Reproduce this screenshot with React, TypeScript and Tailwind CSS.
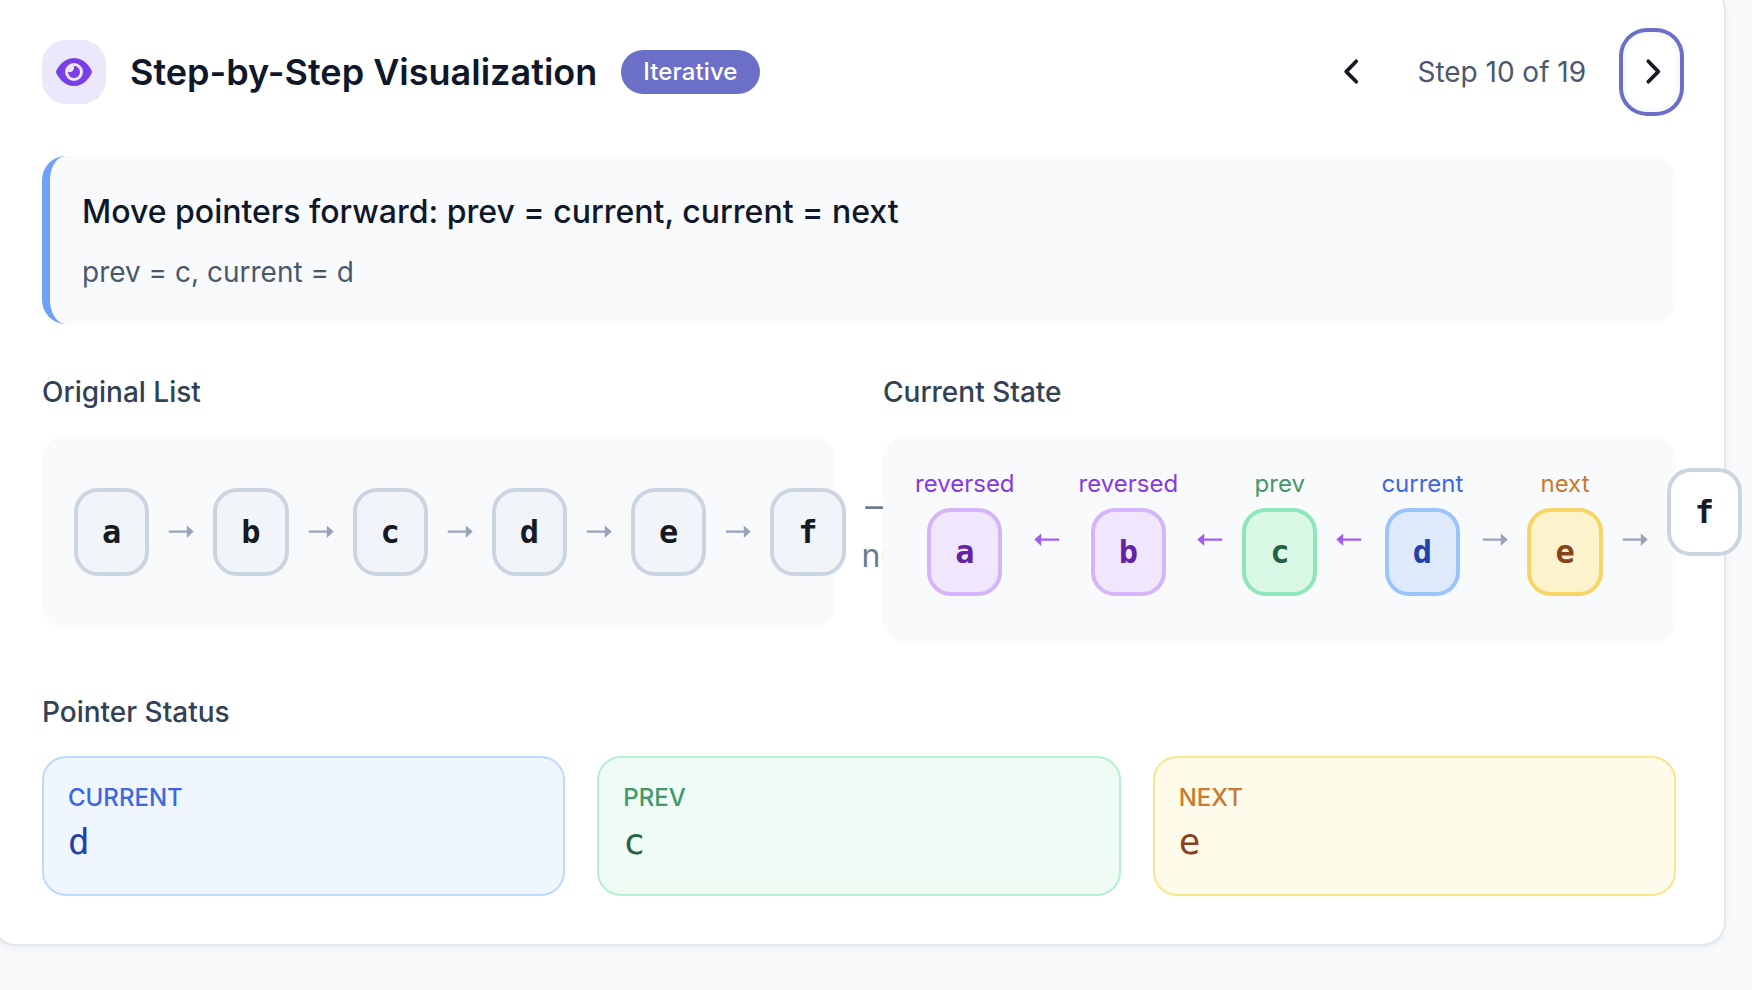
import { Fragment } from "react";
import { FaEye } from "react-icons/fa6";

const tones = {
  plain: { box: "border-[#cbd5e1] bg-[#f1f5f9] text-[#171923]", label: "" },
  open: { box: "border-[#cbd5e1] bg-white text-[#171923]", label: "" },
  purple: { box: "border-[#d4b4fa] bg-[#f1e7fd] text-[#6323a3]", label: "text-[#8838e0]" },
  green: { box: "border-[#8ee6ba] bg-[#daf8e6] text-[#276048]", label: "text-[#43976b]" },
  blue: { box: "border-[#9cc4fb] bg-[#dee9fc] text-[#2440ab]", label: "text-[#3c66e4]" },
  amber: { box: "border-[#f6d566] bg-[#fcf2cb] text-[#87431c]", label: "text-[#c97a30]" },
};

type Tone = keyof typeof tones;

function Node({ value, tone, label }: { value: string; tone: Tone; label?: string }) {
  return (
    <div className="flex shrink-0 flex-col items-center">
      {label && <div className={`mb-2 text-[24px] leading-8 ${tones[tone].label}`}>{label}</div>}
      <div
        className={`rounded-3xl border-4 px-6 py-4 font-['DejaVu_Sans_Mono',monospace] text-[32px] font-bold leading-[48px] ${tones[tone].box}`}
      >
        {value}
      </div>
    </div>
  );
}

function ArrowGlyph({ className }: { className: string }) {
  return (
    <svg viewBox="0 0 32 32" className={className} fill="currentColor">
      <path d="M3.8 14.4h18v-5l6.9 6.2-6.9 6.4v-5.2h-18z" />
    </svg>
  );
}

function Arrow({ back = false }: { back?: boolean }) {
  return (
    <ArrowGlyph
      className={`mx-4 h-8 w-8 shrink-0 self-center ${back ? "-scale-x-100 text-[#a25cf0]" : "text-[#97a4b8]"}`}
    />
  );
}

function Chevron({ d }: { d: string }) {
  return (
    <svg
      viewBox="0 0 48 48"
      className="h-12 w-12 shrink-0"
      fill="none"
      stroke="currentColor"
      strokeWidth="3.7"
      strokeLinecap="round"
      strokeLinejoin="round"
    >
      <path d={d} />
    </svg>
  );
}

const original = ["a", "b", "c", "d", "e", "f"];

const state: { value: string; tone: Tone; label?: string; back?: boolean }[] = [
  { value: "a", tone: "purple", label: "reversed", back: true },
  { value: "b", tone: "purple", label: "reversed", back: true },
  { value: "c", tone: "green", label: "prev", back: true },
  { value: "d", tone: "blue", label: "current" },
  { value: "e", tone: "amber", label: "next" },
  { value: "f", tone: "open" },
];

const pointers = [
  { name: "CURRENT", value: "d", box: "border-[#bfd9fd] bg-[#eff6ff]", label: "text-[#3c66e4]", text: "text-[#2440ab]" },
  { name: "PREV", value: "c", box: "border-[#b5f0d0] bg-[#eefcf5]", label: "text-[#43976b]", text: "text-[#276048]" },
  { name: "NEXT", value: "e", box: "border-[#fae58c] bg-[#fffbeb]", label: "text-[#c97a30]", text: "text-[#87431c]" },
];

export default function App() {
  return (
    <div className="flex h-[990px] w-[1752px] items-start overflow-hidden bg-[#f9fafc] font-[Inter,sans-serif] text-[#0f172a]">
      <section className="-ml-2 -mt-3.5 h-[960px] w-[1734px] shrink-0 rounded-3xl border-2 border-[#e2e8f0] bg-white p-12 shadow-[0_2px_6px_rgba(0,0,0,0.06)]">
        <header className="mb-12 flex h-[72px] items-center justify-between">
          <div className="flex items-center">
            <div className="mr-6 flex h-16 w-16 items-center justify-center rounded-3xl bg-[#ece8fc] text-[#7a3ee6]">
              <FaEye className="h-9 w-9" />
            </div>
            <h2 className="text-[36px] font-semibold leading-[56px]">Step-by-Step Visualization</h2>
            <span className="ml-6 flex h-11 items-center rounded-full bg-[#6c6fc7] px-[22px] text-[24px] font-medium tracking-[0.1px] text-white">
              Iterative
            </span>
          </div>
          <div className="flex items-center text-[#171923]">
            <button className="flex h-[72px] w-[49px] items-center justify-center rounded-[20px]">
              <Chevron d="M26.3 13.3 16.2 23.6l10.1 10.2" />
            </button>
            <span className="ml-[39px] mr-[41px] whitespace-nowrap text-[28px] leading-10 tracking-[-0.03px] text-[#4b586b]">Step 10 of 19</span>
            <button className="flex h-[72px] w-[49px] items-center justify-center rounded-[20px] bg-white shadow-[0_0_0_4px_#f9fafc,0_0_0_8px_#6c6fc7]">
              <Chevron d="M20.3 13.3 30.3 23.6 20.3 33.8" />
            </button>
          </div>
        </header>

        <div className="mb-12 rounded-3xl border-l-8 border-[#6fa2f6] bg-[#f9fafc] p-8">
          <p className="mb-4 text-[32px] font-medium leading-[48px]">
            Move pointers forward: prev = current, current = next
          </p>
          <p className="text-[28px] leading-10 text-[#4b586b]">prev = c, current = d</p>
        </div>

        <div className="mb-12 grid grid-cols-2 items-start gap-12">
          <div className="min-w-0">
            <h3 className="mb-6 text-[28px] font-medium leading-10 text-[#334155]">Original List</h3>
            <div className="rounded-3xl bg-[#f9fafc] p-8">
              <div className="flex h-32 items-center">
                {original.map((v, i) => (
                  <Fragment key={v}>
                    {i > 0 && <Arrow />}
                    <Node value={v} tone="plain" />
                  </Fragment>
                ))}
                <div className="ml-4 w-16 shrink-0 text-[32px] leading-[48px] text-[#6b7a90]">
                  <div className="-ml-px flex h-12 items-center">
                    <ArrowGlyph className="h-9 w-9" />
                  </div>
                  null
                </div>
              </div>
            </div>
          </div>
          <div className="relative min-w-0">
            <h3 className="mb-6 text-[28px] font-medium leading-10 text-[#334155]">Current State</h3>
            <div className="rounded-3xl bg-[#f9fafc] p-8">
              <div className="flex h-36 items-start">
                {state.map((n, i) => (
                  <Fragment key={n.value}>
                    {i > 0 && <Arrow back={state[i - 1].back} />}
                    <Node value={n.value} tone={n.tone} label={n.label} />
                  </Fragment>
                ))}
              </div>
            </div>
          </div>
        </div>

        <h3 className="mb-6 text-[28px] font-medium leading-10 text-[#334155]">Pointer Status</h3>
        <div className="grid grid-cols-3 gap-8">
          {pointers.map((p) => (
            <div key={p.name} className={`rounded-3xl border-2 p-6 ${p.box}`}>
              <div className={`text-[24px] font-medium leading-8 ${p.label}`}>{p.name}</div>
              <div className={`font-['DejaVu_Sans_Mono',monospace] text-[36px] leading-[56px] ${p.text}`}>{p.value}</div>
            </div>
          ))}
        </div>
      </section>
    </div>
  );
}
